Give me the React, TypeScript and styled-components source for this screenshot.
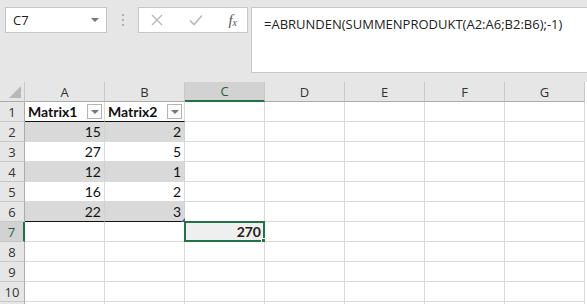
import React from "react"
import styled, { createGlobalStyle } from "styled-components"

const GlobalStyle = createGlobalStyle`
  html, body {
    margin: 0;
    padding: 0;
    background: #ffffff;
  }
  * {
    box-sizing: border-box;
  }
`

const GREEN = "#217346"
const GRID = "#dadada"

const columns = ["A", "B", "C", "D", "E", "F", "G"]
const data: [number, number][] = [
  [15, 2],
  [27, 5],
  [12, 1],
  [16, 2],
  [22, 3],
]

export default function App() {
  const rows = Array.from({ length: 11 }, (_, i) => i + 1)

  return (
    <>
      <GlobalStyle />
      <Window>
        <TopBar>
          <NameBox>
            <span>C7</span>
            <Caret />
          </NameBox>
          <Grip>
            <i />
            <i />
            <i />
          </Grip>
          <FormulaButtons>
            <svg width="12" height="12" viewBox="0 0 12 12">
              <path d="M1 1 L11 11 M11 1 L1 11" stroke="#b9b9b9" strokeWidth="1.4" fill="none" />
            </svg>
            <svg width="14" height="12" viewBox="0 0 14 12">
              <path d="M1 6.5 L5 10.5 L13 1.5" stroke="#b9b9b9" strokeWidth="1.6" fill="none" />
            </svg>
            <Fx>
              f<sub>x</sub>
            </Fx>
          </FormulaButtons>
          <FormulaInput>=ABRUNDEN(SUMMENPRODUKT(A2:A6;B2:B6);-1)</FormulaInput>
        </TopBar>

        <Sheet>
          <Corner>
            <svg width="12" height="12" viewBox="0 0 12 12">
              <path d="M12 0 L12 12 L0 12 Z" fill="#b8b8b8" />
            </svg>
          </Corner>
          {columns.map((c) => (
            <ColHead key={c} $active={c === "C"}>
              {c}
            </ColHead>
          ))}

          {rows.map((r) => (
            <React.Fragment key={r}>
              {/* row 11 only peeks in at the bottom edge, so no label */}
              <RowHead $active={r === 7}>{r <= 10 ? r : ""}</RowHead>
              {columns.map((c, ci) => {
                const inTable = ci < 2 && r <= 6
                const band = inTable && r > 1 && r % 2 === 0
                const ruleBottom = ci < 2 && (r === 1 || r === 6)
                if (inTable && r === 1) {
                  return (
                    <Cell key={c} $ruleBottom>
                      <HeaderLabel>{ci === 0 ? "Matrix1" : "Matrix2"}</HeaderLabel>
                      <FilterButton>
                        <Caret />
                      </FilterButton>
                    </Cell>
                  )
                }
                if (inTable) {
                  return (
                    <Cell key={c} $band={band} $ruleBottom={ruleBottom} $right>
                      {data[r - 2][ci]}
                      {ci === 1 && r === 6 && <ResizeMark />}
                    </Cell>
                  )
                }
                if (c === "C" && r === 7) {
                  return (
                    <Selected key={c}>
                      270
                      <FillHandle />
                    </Selected>
                  )
                }
                return <Cell key={c} />
              })}
            </React.Fragment>
          ))}
        </Sheet>
      </Window>
    </>
  )
}

const Window = styled.div`
  width: 587px;
  height: 304px;
  overflow: hidden;
  background: #e6e6e6;
  font-family: "Open Sans", "Noto Sans", sans-serif;
`

const TopBar = styled.div`
  display: flex;
  align-items: flex-start;
  height: 82px;
  padding: 7px 0 0 5px;
`

const NameBox = styled.div`
  display: flex;
  align-items: center;
  justify-content: space-between;
  width: 102px;
  height: 26px;
  padding: 0 7px 0 7px;
  background: #fff;
  border: 1px solid #c6c6c6;
  font-size: 13px;
  color: #222;
`

const Caret = styled.span`
  width: 0;
  height: 0;
  border-left: 4px solid transparent;
  border-right: 4px solid transparent;
  border-top: 4px solid #777;
`

const Grip = styled.div`
  display: flex;
  flex-direction: column;
  align-items: center;
  gap: 3px;
  width: 31px;
  padding-top: 7px;
  i {
    width: 2px;
    height: 2px;
    background: #b0b0b0;
  }
`

const FormulaButtons = styled.div`
  display: flex;
  align-items: center;
  justify-content: space-between;
  width: 110px;
  height: 26px;
  padding: 0 10px 0 12px;
  background: #fff;
  border: 1px solid #c6c6c6;
`

const Fx = styled.span`
  font-family: "Liberation Serif", serif;
  font-style: italic;
  font-size: 15px;
  color: #555;
  sub {
    font-size: 10px;
    vertical-align: -1px;
  }
`

const FormulaInput = styled.div`
  flex: 1;
  height: 66px;
  margin-left: 3px;
  padding: 7px 0 0 12px;
  background: #fff;
  border: 1px solid #c6c6c6;
  border-right: none;
  font-size: 13px;
  color: #222;
  white-space: nowrap;
`

const Sheet = styled.div`
  display: grid;
  grid-template-columns: 25px repeat(7, 80px);
  grid-auto-rows: 20px;
  background: #fff;
  font-family: Lato, "Open Sans", sans-serif;
`

const Corner = styled.div`
  display: flex;
  align-items: flex-end;
  justify-content: flex-end;
  padding: 0 3px 3px 0;
  background: #e6e6e6;
  border-right: 1px solid #c8c8c8;
  border-bottom: 1px solid #ababab;
`

const ColHead = styled.div<{ $active?: boolean }>`
  display: flex;
  align-items: center;
  justify-content: center;
  font-family: "Open Sans", sans-serif;
  font-size: 13px;
  color: ${(p) => (p.$active ? "#1f5f3a" : "#333")};
  background: ${(p) => (p.$active ? "#d2d2d2" : "#e6e6e6")};
  border-right: 1px solid #c8c8c8;
  border-bottom: ${(p) => (p.$active ? `2px solid ${GREEN}` : "1px solid #ababab")};
`

const RowHead = styled.div<{ $active?: boolean }>`
  display: flex;
  align-items: center;
  justify-content: center;
  font-family: "Open Sans", sans-serif;
  font-size: 13px;
  color: ${(p) => (p.$active ? "#1f5f3a" : "#333")};
  background: ${(p) => (p.$active ? "#d2d2d2" : "#e6e6e6")};
  border-right: ${(p) => (p.$active ? `2px solid ${GREEN}` : "1px solid #ababab")};
  border-bottom: 1px solid #c8c8c8;
`

const Cell = styled.div<{ $band?: boolean; $ruleBottom?: boolean; $right?: boolean }>`
  position: relative;
  display: flex;
  align-items: center;
  justify-content: ${(p) => (p.$right ? "flex-end" : "space-between")};
  padding: 0 3px;
  font-size: 14px;
  color: #111;
  background: ${(p) => (p.$band ? "#d9d9d9" : "#fff")};
  border-right: 1px solid ${(p) => (p.$band ? "#d0d0d0" : GRID)};
  border-bottom: 1px solid ${(p) => (p.$ruleBottom ? "#111" : GRID)};
`

const HeaderLabel = styled.span`
  font-weight: 700;
`

const FilterButton = styled.span`
  display: flex;
  align-items: center;
  justify-content: center;
  width: 15px;
  height: 15px;
  margin-right: -1px;
  background: #fafafa;
  border: 1px solid #b5b5b5;
`

const ResizeMark = styled.span`
  position: absolute;
  right: -1px;
  bottom: -1px;
  width: 0;
  height: 0;
  border-left: 4px solid transparent;
  border-bottom: 4px solid #4a5aa8;
`

const Selected = styled.div`
  position: relative;
  display: flex;
  align-items: center;
  justify-content: flex-end;
  margin: -1px 0 0 -1px;
  padding: 0 2px;
  font-size: 14px;
  font-weight: 700;
  color: #222;
  background: #efefef;
  border: 2px solid ${GREEN};
`

const FillHandle = styled.span`
  position: absolute;
  right: -4px;
  bottom: -4px;
  width: 6px;
  height: 6px;
  background: ${GREEN};
  border: 1px solid #fff;
`
